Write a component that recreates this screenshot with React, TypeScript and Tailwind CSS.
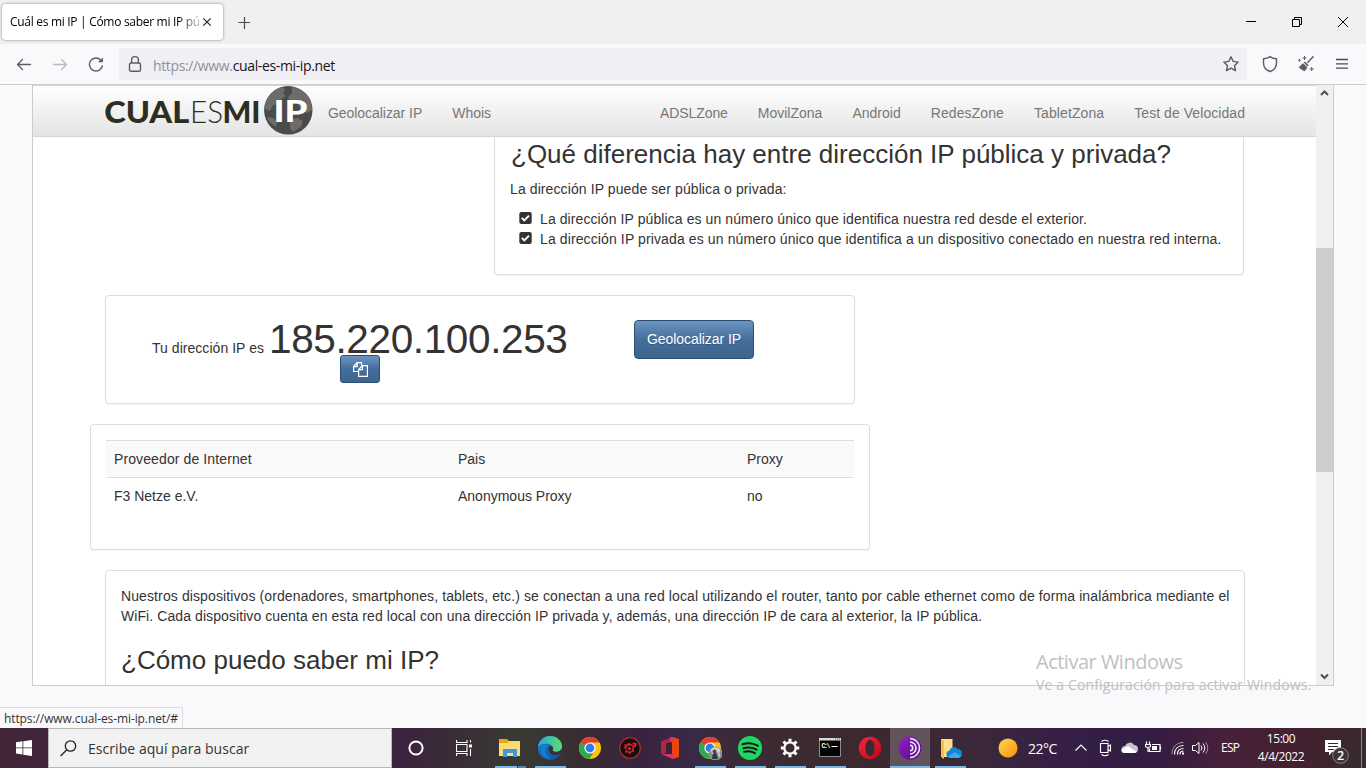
import React from "react";

const UI = "font-['Open_Sans','Noto_Sans',sans-serif]";
const CARD = "rounded-[4px] border border-[#dddddd] bg-white shadow-[0_1px_1px_rgba(0,0,0,0.05)]";
const BTN =
  "border border-[#2b4e75] bg-linear-to-b from-[#6d94bf] via-[#446e9b] via-50% to-[#3e648d] text-white [text-shadow:0_1px_0_rgba(0,0,0,0.2)]";

function TabStrip() {
  return (
    <div className="flex h-[44px] shrink-0 items-start bg-[#f0f0f0]">
      <div className="mt-[4px] ml-[2px] flex h-[36px] w-[221px] items-center rounded-[4px] bg-white pl-[8px] shadow-[0_0_3px_rgba(0,0,0,0.45)]">
        <div className={`w-[190px] text-[12px] tracking-[-0.3px] whitespace-nowrap text-black [mask-image:linear-gradient(to_right,black_168px,transparent_196px)] ${UI}`}>
          Cuál es mi IP | Cómo saber mi IP púl
        </div>
        <svg width="10" height="10" viewBox="0 0 10 10" className="ml-[2px]">
          <path d="M1.3 1.3 8.7 8.7M8.7 1.3 1.3 8.7" stroke="#222" strokeWidth="1.2" />
        </svg>
      </div>
      <svg width="12" height="12" viewBox="0 0 12 12" className="mt-[17px] ml-[15px]">
        <path d="M6.500 0v12M.5 5.500h12" stroke="#4b4a54" strokeWidth="1.2" />
      </svg>
      <div className="mt-[16px] ml-auto flex gap-[36px] pr-[18px]">
        <svg width="10" height="12"><path d="M0 5.5h10" stroke="#000" /></svg>
        <svg width="10" height="12" fill="none" stroke="#000"><path d="M.5 3.5h7v7h-7zM2.5 3.5v-2h7v7h-2" /></svg>
        <svg width="10" height="12" fill="none" stroke="#000"><path d="M0 1 10 11M10 1 0 11" /></svg>
      </div>
    </div>
  );
}

function Toolbar() {
  return (
    <div className="flex h-[41px] shrink-0 items-center border-b border-[#cccccc] bg-[#f9f9fb] pl-[16px]">
      <svg width="16" height="16" fill="none" stroke="#5b5b66" strokeWidth="1.3" strokeLinecap="round" strokeLinejoin="round">
        <path d="M14.500 8.500H1.5M6.500 3.500 1.5 8.500 6.500 13.5" />
      </svg>
      <svg width="16" height="16" className="ml-[20px]" fill="none" stroke="#b9b9bf" strokeWidth="1.3" strokeLinecap="round" strokeLinejoin="round">
        <path d="M1.500 8.500h13M9.500 3.500 14.5 8.500 9.500 13.5" />
      </svg>
      <svg width="16" height="16" className="ml-[20px]" fill="none" stroke="#5b5b66" strokeWidth="1.4" strokeLinecap="round">
        <path d="M14.3 10A6.5 6.5 0 1 1 12.8 4.1L14 5.300" />
        <path d="M14.8 1.5v4.8H10z" fill="#5b5b66" stroke="none" />
      </svg>
      <div className="ml-[15px] flex h-[32px] w-[1128px] items-center rounded-[4px] bg-[#f0f0f4] pl-[9px]">
        <svg width="14" height="18" viewBox="0 0 14 18" fill="none" stroke="#5b5b66" strokeWidth="1.4">
          <rect x="1.5" y="8" width="11" height="8.3" rx="1.6" />
          <path d="M3.6 8V5a3.4 3.4 0 0 1 6.8 0v3" />
        </svg>
        <span className={`mt-[2px] ml-[11px] text-[14px] tracking-[-0.36px] text-[#15141a] ${UI}`}>
          <span className="text-[#8f8f98]">https://www.</span>cual-es-mi-ip.net
        </span>
        <svg width="18" height="18" viewBox="0 0 18 18" className="mr-[7px] ml-auto" fill="none" stroke="#5b5b66" strokeWidth="1.4" strokeLinejoin="round">
          <path d="m9 1.8 2.2 4.6 5 .7-3.6 3.5.9 5L9 13.2l-4.5 2.4.9-5L1.8 7.100l5-.7z" />
        </svg>
      </div>
      <svg width="16" height="18" viewBox="0 0 16 18" className="ml-[15px]" fill="none" stroke="#5b5b66" strokeWidth="1.4" strokeLinejoin="round">
        <path d="M8 1.500C6.500 3 4 3.700 1.500 3.800v4C1.500 12.500 5 15.500 8 16.500c3-1 6.500-4 6.500-8.700v-4C12 3.700 9.500 3 8 1.500z" />
      </svg>
      <svg width="18" height="18" viewBox="0 0 18 18" className="ml-[19px]" fill="#5b5b66">
        <path d="M16.600 1.200 10.500 7.800" stroke="#5b5b66" strokeWidth="1.400" />
        <path d="M8 6.500 11.700 10.200 10.500 11.500 6.800 7.600zM6.200 8.200l4 4c-.5 1.700-1.700 3.200-3.300 4.300l-.6-1.600-1.200.9-.5-1.800-1.700.3.200-1.500-2-.5C3.200 11.800 4.300 9 6.200 8.200z" />
        <path d="M7.500 1v4M5.500 3h4M14.700 12v4M12.700 14h4M2.500 4v2.600M1.200 5.300h2.600" stroke="#5b5b66" strokeWidth="1" />
      </svg>
      <svg width="12" height="12" className="ml-[21px]"><path d="M0 1.500h12M0 5.800h12M0 10.200h12" stroke="#4b4a54" strokeWidth="1.300" /></svg>
    </div>
  );
}

function Logo() {
  return (
    <svg width="212" height="50" viewBox="103 86 212 50" className="shrink-0">
      <g fill="#2d2e20" fontFamily="Lato, 'Open Sans', sans-serif" fontSize="31">
        <text x="104.200" y="122.500" fontWeight="900" textLength="85" lengthAdjust="spacingAndGlyphs">CUAL</text>
        <text x="190" y="122.500" fontWeight="300" textLength="33" lengthAdjust="spacingAndGlyphs">ES</text>
        <text x="222.500" y="122.500" fontWeight="900" textLength="38" lengthAdjust="spacingAndGlyphs">MI</text>
      </g>
      <circle cx="288.300" cy="110.300" r="24.200" fill="#4b4b4b" />
      <g fill="#6c6c6c">
        <path d="M266 101c3-7 9-12 15-14l4 2-2 4 3 3-5 3-2 5-6 1-3 6-5-2z" />
        <path d="M292 87c9 1 16 7 19 14l1 9-5 3-6-3-3-6-8-1-2-6 4-4z" />
        <path d="M267 117l6 1 4 4-1 5c-5-3-8-6-9-10zM290 120l7-2 6 3-2 6-8 5-3-4z" />
      </g>
      <text x="273.500" y="121.500" fill="#fff" fontFamily="Lato, 'Open Sans', sans-serif" fontWeight="900" fontSize="30.500" textLength="34" lengthAdjust="spacingAndGlyphs">IP</text>
    </svg>
  );
}

function Navbar() {
  return (
    <div className="relative z-10 flex h-[52px] shrink-0 items-center border-y border-[#d5d5d5] bg-linear-to-b from-white to-[#e4e4e4] pl-[70px] text-[14px] whitespace-nowrap text-[#777777]">
      <Logo />
      <span className="mt-[4px] ml-[13px] tracking-[-0.05px]">Geolocalizar IP</span>
      <span className="mt-[4px] ml-[30px]">Whois</span>
      <div className="mt-[4px] mr-[71px] ml-auto flex gap-[30px]">
        {["ADSLZone", "MovilZona", "Android", "RedesZone", "TabletZona", "Test de Velocidad"].map((t) => (
          <span key={t} className="first:tracking-[-0.08px] last:tracking-[0.06px] nth-[4]:tracking-[0.1px] nth-[5]:tracking-[0.1px]">{t}</span>
        ))}
      </div>
    </div>
  );
}

function CheckItem({ children }: { children: React.ReactNode }) {
  return (
    <li className="flex items-center whitespace-nowrap">
      <svg width="13" height="12" viewBox="0 0 13 12" className="-mt-[2px] mr-[8px] ml-[9px]">
        <rect x=".3" width="12.400" height="12" rx="2" fill="#333" />
        <path d="m2.800 5.800 2.500 2.500L10 3.600" fill="none" stroke="#fff" strokeWidth="1.900" />
      </svg>
      {children}
    </li>
  );
}

function Page() {
  return (
    <div className="flex min-w-0 flex-1 flex-col overflow-hidden bg-white font-['Liberation_Sans',Arial,sans-serif] text-[14px] leading-[20px] text-[#333333]">
      <Navbar />
      <div className={`-mt-[6px] ml-[461px] h-[144px] w-[750px] shrink-0 px-[15px] pt-[7px] ${CARD}`}>
        <h2 className="ml-px text-[26px] leading-[30px] whitespace-nowrap">¿Qué diferencia hay entre dirección IP pública y privada?</h2>
        <p className="mt-[10px] tracking-[0.1px]">La dirección IP puede ser pública o privada:</p>
        <ul className="mt-[10px]">
          <CheckItem><span className="tracking-[0.09px]">La dirección IP pública es un número único que identifica nuestra red desde el exterior.</span></CheckItem>
          <CheckItem><span className="tracking-[0.115px]">La dirección IP privada es un número único que identifica a un dispositivo conectado en nuestra red interna.</span></CheckItem>
        </ul>
      </div>
      <div className={`mt-[20px] ml-[72px] flex h-[109px] w-[750px] shrink-0 items-start ${CARD}`}>
        <div className="ml-[46px] w-[416px] pt-[20px]">
          <div className="flex items-baseline whitespace-nowrap">
            <span className="tracking-[0.04px]">Tu dirección IP es</span>
            <span className="ml-[5px] text-[40.5px] leading-[46px] tracking-[-0.37px]">185.220.100.253</span>
          </div>
          <button className={`-mt-[7px] ml-[188px] flex h-[28px] w-[40px] items-center justify-center rounded-[3px] ${BTN}`}>
            <svg width="15" height="15" viewBox="0 0 15 15" fill="none" stroke="#fff" strokeWidth="1.200">
              <path d="M5.500 9.500H.600V4.500L4 .600h4.500v3M4.200.600v4H.600M9.500 3.600h4.900v10.800H5.600V7.500zM9.500 3.600v4H5.600" />
            </svg>
          </button>
        </div>
        <button className={`mt-[24px] ml-[66px] h-[39px] w-[120px] rounded-[4px] pb-[2px] text-[14px] tracking-[-0.05px] whitespace-nowrap ${BTN}`}>Geolocalizar IP</button>
      </div>
      <div className={`mt-[20px] ml-[57px] h-[126px] w-[780px] shrink-0 p-[15px] ${CARD}`}>
        <div className="grid h-[37px] grid-cols-[344px_289px_1fr] items-center border-t border-[#dddddd] bg-[#f9f9f9] pl-[8px]">
          <span className="tracking-[0.11px]">Proveedor de Internet</span><span>Pais</span><span>Proxy</span>
        </div>
        <div className="grid h-[37px] grid-cols-[344px_289px_1fr] items-center border-t border-[#dddddd] pl-[8px]">
          <span>F3 Netze e.V.</span><span>Anonymous Proxy</span><span>no</span>
        </div>
      </div>
      <div className={`mt-[20px] ml-[72px] h-[180px] w-[1140px] shrink-0 p-[15px] ${CARD}`}>
        <p className="whitespace-nowrap">
          <span className="tracking-[0.108px]">Nuestros dispositivos (ordenadores, smartphones, tablets, etc.) se conectan a una red local utilizando el router, tanto por cable ethernet como de forma inalámbrica mediante el</span>
          <br />
          <span className="tracking-[0.083px]">WiFi. Cada dispositivo cuenta en esta red local con una dirección IP privada y, además, una dirección IP de cara al exterior, la IP pública.</span>
        </p>
        <h2 className="mt-[19px] text-[26px] leading-[30px]">¿Cómo puedo saber mi IP?</h2>
      </div>
    </div>
  );
}

function Scrollbar() {
  return (
    <div className="flex w-[17px] shrink-0 flex-col bg-[#f0f0f0]">
      <svg width="17" height="17"><path d="m5 10 3.500-3.500L12 10" fill="none" stroke="#505050" strokeWidth="2" /></svg>
      <div className="mt-[146px] h-[224px] bg-[#cdcdcd]" />
      <svg width="17" height="17" className="mt-auto"><path d="m5 6.500 3.500 3.500L12 6.500" fill="none" stroke="#505050" strokeWidth="2" /></svg>
    </div>
  );
}

const ICONS: Record<string, React.ReactNode> = {
  explorer: (
    <>
      <path d="M1 3h8l2 2h-10z" fill="#e0a100" />
      <path d="M1 5h21v15H1z" fill="#ffd766" />
      <path d="M1 3h7l2 2v3H1z" fill="#e5a817" />
      <path d="M1 7h21v13H1z" fill="#ffdb73" />
      <path d="M5 13h14v8h-4v-4H9v4H5z" fill="#3f99df" />
    </>
  ),
  edge: (
    <>
      <defs>
        <linearGradient id="eg1" x1="0" x2="1"><stop offset="0" stopColor="#2aa5dd" /><stop offset="1" stopColor="#5be06b" /></linearGradient>
        <linearGradient id="eg2" x1="0" y1="0" x2="1" y2="1"><stop offset="0" stopColor="#1488d8" /><stop offset="1" stopColor="#0d4f9d" /></linearGradient>
      </defs>
      <circle cx="12" cy="12" r="12" fill="url(#eg2)" />
      <path d="M0 11C1 4 6 0 12 0c7 0 12 5 12 10 0 4-3 6-6 6-2.500 0-4-1-3.500-2 1-1.500.5-5-3.500-6C7 7 2 8 0 11z" fill="url(#eg1)" />
      <path d="M9 9c-4 3-3 11 4 13-5 .5-9.500-3-9.500-7.500C3.500 11 6 9 9 9z" fill="#1b7fd0" />
      <path d="M11.500 10c-2 2-1.500 8 5 9 2.500.4 4-.5 5-1.200.8-.6 2.500-2.800 2.500-4l.5-1-1.500 1c-2 2-5 2.500-7 1.700-1.500-.6-1.500-1.500-1-2.500.5-1 0-2.500-2.500-3z" fill="#373034" />
    </>
  ),
  chrome: (
    <>
      <circle cx="12" cy="12" r="11" fill="#fbc116" />
      <path d="M12 12 2.500 6.500A11 11 0 0 1 21.500 6.500H12z" fill="#e33b2e" />
      <path d="M12 12 2.500 6.500A11 11 0 0 0 11.500 23L16.500 14.500z" fill="#2da94f" />
      <circle cx="12" cy="12" r="5.600" fill="#fff" />
      <circle cx="12" cy="12" r="4.400" fill="#2f7de9" />
    </>
  ),
  red: (
    <>
      <circle cx="12" cy="12" r="10.300" fill="#131011" stroke="#b02a2e" strokeWidth="1.200" />
      <path d="m6 8 3 .5 2-2 2 2 3-2 3 1-1 3-2 1v4l-3 1-1 2-2-2H7l1-3-2.500-2L7 10z" fill="#d9202c" />
      <circle cx="11.500" cy="12.500" r="2.400" fill="none" stroke="#131011" strokeWidth="1.300" />
      <path d="m12 12 4-4" stroke="#131011" />
    </>
  ),
  office: (
    <>
      <path d="M3 5.500 14 1v4.500L8 7.500v9L4.500 18 3 17z" fill="#b3263d" />
      <path d="M12 1.500 15 1l6 2v18l-6 2-3-1.500z" fill="#e8460c" />
      <path d="M12 1.500 15 1v4l-3 1zM3 17l3 1h9v5L5 19z" fill="#d9306c" />
      <path d="M8 7.500 14 6v12H8z" fill="#38243a" />
    </>
  ),
  spotify: (
    <>
      <circle cx="12" cy="12" r="12" fill="#1ed760" />
      <path d="M4.500 8.300c5-1.500 11-1 15.500 1.500M5.500 12.200c4-1.200 9-.8 13 1.500M6.200 15.800c3.500-1 7.500-.6 10.800 1.300" fill="none" stroke="#161616" strokeWidth="2" strokeLinecap="round" />
    </>
  ),
  gear: (
    <g fill="none" stroke="#fff">
      <circle cx="12" cy="12" r="5.700" strokeWidth="2.300" />
      <path d="M12 2.800v3M12 18.200v3M2.800 12h3M18.200 12h3M5.500 5.500l2.100 2.100M16.400 16.400l2.100 2.100M18.500 5.500l-2.100 2.100M7.600 16.400l-2.100 2.100" strokeWidth="3" />
    </g>
  ),
  cmd: (
    <>
      <path d="M1.500 2.500h21v18h-21z" fill="#050505" stroke="#8c8c8c" />
      <path d="M1 2h22v2.500H1z" fill="#d8d8d8" />
      <path d="M17 3h1M19 3h1M21 3h1" stroke="#555" />
      <text x="3.500" y="11.500" fill="#fff" fontSize="6.500" fontFamily="'Liberation Mono', monospace" fontWeight="700" textLength="9">C:\</text>
      <path d="M13.500 10.500h6" stroke="#fff" />
    </>
  ),
  opera: (
    <>
      <defs><linearGradient id="og" x2="1" y2="1"><stop offset="0" stopColor="#ff2338" /><stop offset="1" stopColor="#b2091c" /></linearGradient></defs>
      <circle cx="12" cy="12" r="11.200" fill="url(#og)" />
      <ellipse cx="12" cy="12" rx="4.600" ry="8.300" fill="#3a292f" />
    </>
  ),
  tor: (
    <>
      <defs><linearGradient id="tg" y2="1"><stop offset="0" stopColor="#9a1bd0" /><stop offset="1" stopColor="#4b0f7a" /></linearGradient></defs>
      <circle cx="12" cy="12" r="11.500" fill="url(#tg)" />
      <path d="M12 2.500a9.500 9.500 0 0 1 0 19M12 6a6 6 0 0 1 0 12M12 9.300a2.700 2.700 0 0 1 0 5.400" fill="none" stroke="#f1e4f7" strokeWidth="1.600" />
    </>
  ),
  onedrive: (
    <>
      <path d="M3 3h11.500v18H3z" fill="#ffe08a" />
      <path d="M3 3 6 5v18l-3-2z" fill="#f3c24d" />
      <path d="M12 22a3.800 3.800 0 0 1-.5-7.500 4.500 4.500 0 0 1 8-1.500 4.500 4.500 0 0 1 .5 9z" fill="#1484d8" />
      <path d="M10.500 20 17 16l6 4c-.5 1.500-2 2-3 2h-8z" fill="#35aaf0" />
    </>
  ),
};
ICONS.profile = (
  <>
    {ICONS.chrome}
    <circle cx="17.500" cy="17.500" r="7" fill="#8d8f91" />
    <path d="M12.500 14c2-3 7-4 10 0l-1 3-4-1-3 2z" fill="#d4d1c8" />
    <path d="M14 23c0-4 1-6 3-6s2 2 3 6z" fill="#263c58" />
    <circle cx="16.500" cy="15.500" r="2" fill="#55443d" />
    <path d="m20 17 2 1-1 4z" fill="#e9e3d9" />
  </>
);

const APPS: [string, boolean][] = [
  ["explorer", true], ["edge", true], ["chrome", false], ["red", false], ["office", false], ["profile", true],
  ["spotify", true], ["gear", true], ["cmd", true], ["opera", false], ["tor", true], ["onedrive", true],
];

function Taskbar() {
  return (
    <div
      className={`flex h-[40px] shrink-0 items-stretch bg-[linear-gradient(to_right,#42263a_0px,#3a233f_400px,#3a2c37_450px,#393a32_520px,#382a34_590px,#38233f_640px,#392945_690px,#3b2b32_760px,#3b292f_860px,#3b2839_980px,#351f46_1060px,#331c42_1150px,#48203a_1230px,#43202f_1300px,#382b30_1366px)] text-white ${UI}`}
    >
      <div className="flex w-[48px] items-center justify-center">
        <svg width="16" height="16" fill="#fff"><path d="M0 2.200 6.500 1.300v6.200H0zM7.300 1.200 16 0v7.500H7.300zM0 8.300h6.500v6.200L0 13.600zM7.300 8.300H16V16l-8.700-1.300z" /></svg>
      </div>
      <div className="flex w-[344px] items-center border border-[#b9b9b9] bg-[#f2f2f2] pl-[11px]">
        <svg width="17" height="17" fill="none" stroke="#222" strokeWidth="1.300"><circle cx="10.500" cy="6" r="5.200" /><path d="M6.800 9.700.600 16" /></svg>
        <span className="ml-[11px] text-[14px] tracking-[0.05px] text-[#333]">Escribe aquí para buscar</span>
      </div>
      <div className="flex w-[48px] items-center justify-center">
        <svg width="16" height="16"><circle cx="8" cy="8" r="6.600" fill="none" stroke="#fff" strokeWidth="2" /></svg>
      </div>
      <div className="flex w-[50px] items-center pl-[16px]">
        <svg width="17" height="16" fill="none" stroke="#fff" strokeWidth="1.100">
          <path d="M.500 0v2.500h10.500V0M.500 4.500h10.500v7H.500zM.500 16v-2.500h10.500V16M14.500 0v2.500M14.500 9v7" />
          <path d="M13 4.500h3v3h-3z" fill="#fff" stroke="none" />
        </svg>
      </div>
      {APPS.map(([name, open]) => (
        <div key={name} className={`flex w-[40px] flex-col items-center ${name === "tor" ? "bg-white/20" : ""}`}>
          <svg width="24" height="24" className="mt-[8px]">{ICONS[name]}</svg>
          {open && (
            <div className={`mt-auto flex h-[2px] ${name === "tor" ? "w-full" : "w-[31px]"}`}>
              <div className="flex-1 bg-[#76b9ed]" />
              {name === "explorer" && <div className="ml-px w-[8px] bg-[#5585ad]" />}
            </div>
          )}
        </div>
      ))}
      <svg width="20" height="20" className="mt-[10px] ml-[28px]">
        <defs><linearGradient id="sun" x2="1" y2="1"><stop offset="0" stopColor="#ffd94f" /><stop offset="1" stopColor="#fb8f0b" /></linearGradient></defs>
        <circle cx="10" cy="10" r="9.500" fill="url(#sun)" />
      </svg>
      <span className="mt-[1px] ml-[10px] w-[47px] self-center text-[14px] tracking-[-0.5px]">22°C</span>
      <svg width="12" height="40" fill="none" stroke="#fff" strokeWidth="1.200"><path d="m.500 22.500 5.500-5.500 5.500 5.500" /></svg>
      <svg width="14" height="40" className="ml-[12px]" fill="none" stroke="#fff" strokeWidth="1.100">
        <path d="M1.500 15.500h7.500v9H1.500zM9 18.500l2.500-1.500v6L9 21.500M2.500 13.500q3.500-2.500 7 0M2.500 26.500q3.500 2.500 7 0" />
      </svg>
      <svg width="17" height="40" className="ml-[8px]">
        <path d="M4 25a3.500 3.500 0 0 1 0-7 5 5 0 0 1 9-1 4 4 0 0 1 0 8z" fill="#c7c3cb" />
        <path d="M3.500 25c-4 0-4-5 0-5 2-2 5-2 6 0l6 3.500c-.5 1-1.500 1.500-3 1.500z" fill="#fff" />
      </svg>
      <svg width="17" height="40" className="ml-[7px]" fill="none" stroke="#fff" strokeWidth="1.200">
        <path d="M7 16.500h8v7H4.500v-3M15.500 18.500v3M1.500 13.500v3M4.500 13.500v3M.500 16.500h5v2q-2.500 2-5 0zM3 19v5" />
        <path d="M7 18h5v4H7z" fill="#fff" stroke="none" />
      </svg>
      <svg width="14" height="40" className="ml-[9px]" fill="none" stroke="#fff">
        <path d="M1 26C1 19 5.500 14.500 12.500 14.500" stroke="#a39aa9" />
        <path d="M3.500 26.500c0-5.500 3.500-9 9-9M6.500 26.500c0-4 2-6 6-6M9 26.500c0-2 1.500-3.500 3.500-3.500" strokeWidth="1.200" />
        <path d="M11 24.500h2v2h-2z" fill="#fff" stroke="none" />
      </svg>
      <svg width="17" height="40" className="ml-[7px]" fill="none" stroke="#fff">
        <path d="M.500 17.500h3L7 14.500v11l-3.500-3H.500zM9 17.500q2 2.500 0 5M11 15.500q3.500 4.500 0 9" />
        <path d="M13.500 14q4.500 6 0 12" stroke="#a391a1" />
      </svg>
      <span className="ml-[12px] w-[20px] self-center text-[12px] tracking-[-0.7px]">ESP</span>
      <div className="ml-[7px] flex w-[66px] flex-col items-center justify-center text-[12px] leading-[18px] tracking-[-0.45px] whitespace-nowrap">
        <span>15:00</span><span>4/4/2022</span>
      </div>
      <svg width="26" height="26" className="mt-[11px] ml-[10px]">
        <path d="M1 1h16v12H8l-3 3.500V13H1z" fill="#fff" />
        <path d="M4 4.500h10M4 7.500h10M4 10.500h6" stroke="#43202f" />
        <circle cx="16.500" cy="16.500" r="7.800" fill="#3c3438" stroke="#8c858a" />
        <text x="16.500" y="21" fill="#fff" fontSize="12.500" fontWeight="600" textAnchor="middle">2</text>
      </svg>
      <div className="mr-[4px] ml-auto w-px bg-[#8b7f87]" />
    </div>
  );
}

export default function App() {
  return (
    <div className="relative flex h-[768px] w-[1366px] flex-col overflow-hidden bg-[#f9f9fb]">
      <TabStrip />
      <Toolbar />
      <div className="ml-[32px] flex h-[601px] w-[1302px] shrink-0 border-x border-b border-[#cccccc]">
        <Page />
        <Scrollbar />
      </div>
      <div className={`mt-auto flex h-[21px] w-[183px] shrink-0 items-center border-t border-r border-[#dcdce0] bg-[#f9f9fb] pt-px pl-[4px] text-[12px] tracking-[-0.1px] whitespace-nowrap text-[#333] ${UI}`}>
        https://www.cual-es-mi-ip.net/#
      </div>
      <Taskbar />
      <div className={`absolute top-[648px] left-[1036px] z-20 whitespace-nowrap text-[#bfbfc1] ${UI}`}>
        <div className="text-[20px] leading-[28px] tracking-[-0.5px]">Activar Windows</div>
        <div className="text-[14px] leading-[18px] tracking-[0.14px]">Ve a Configuración para activar Windows.</div>
      </div>
    </div>
  );
}
